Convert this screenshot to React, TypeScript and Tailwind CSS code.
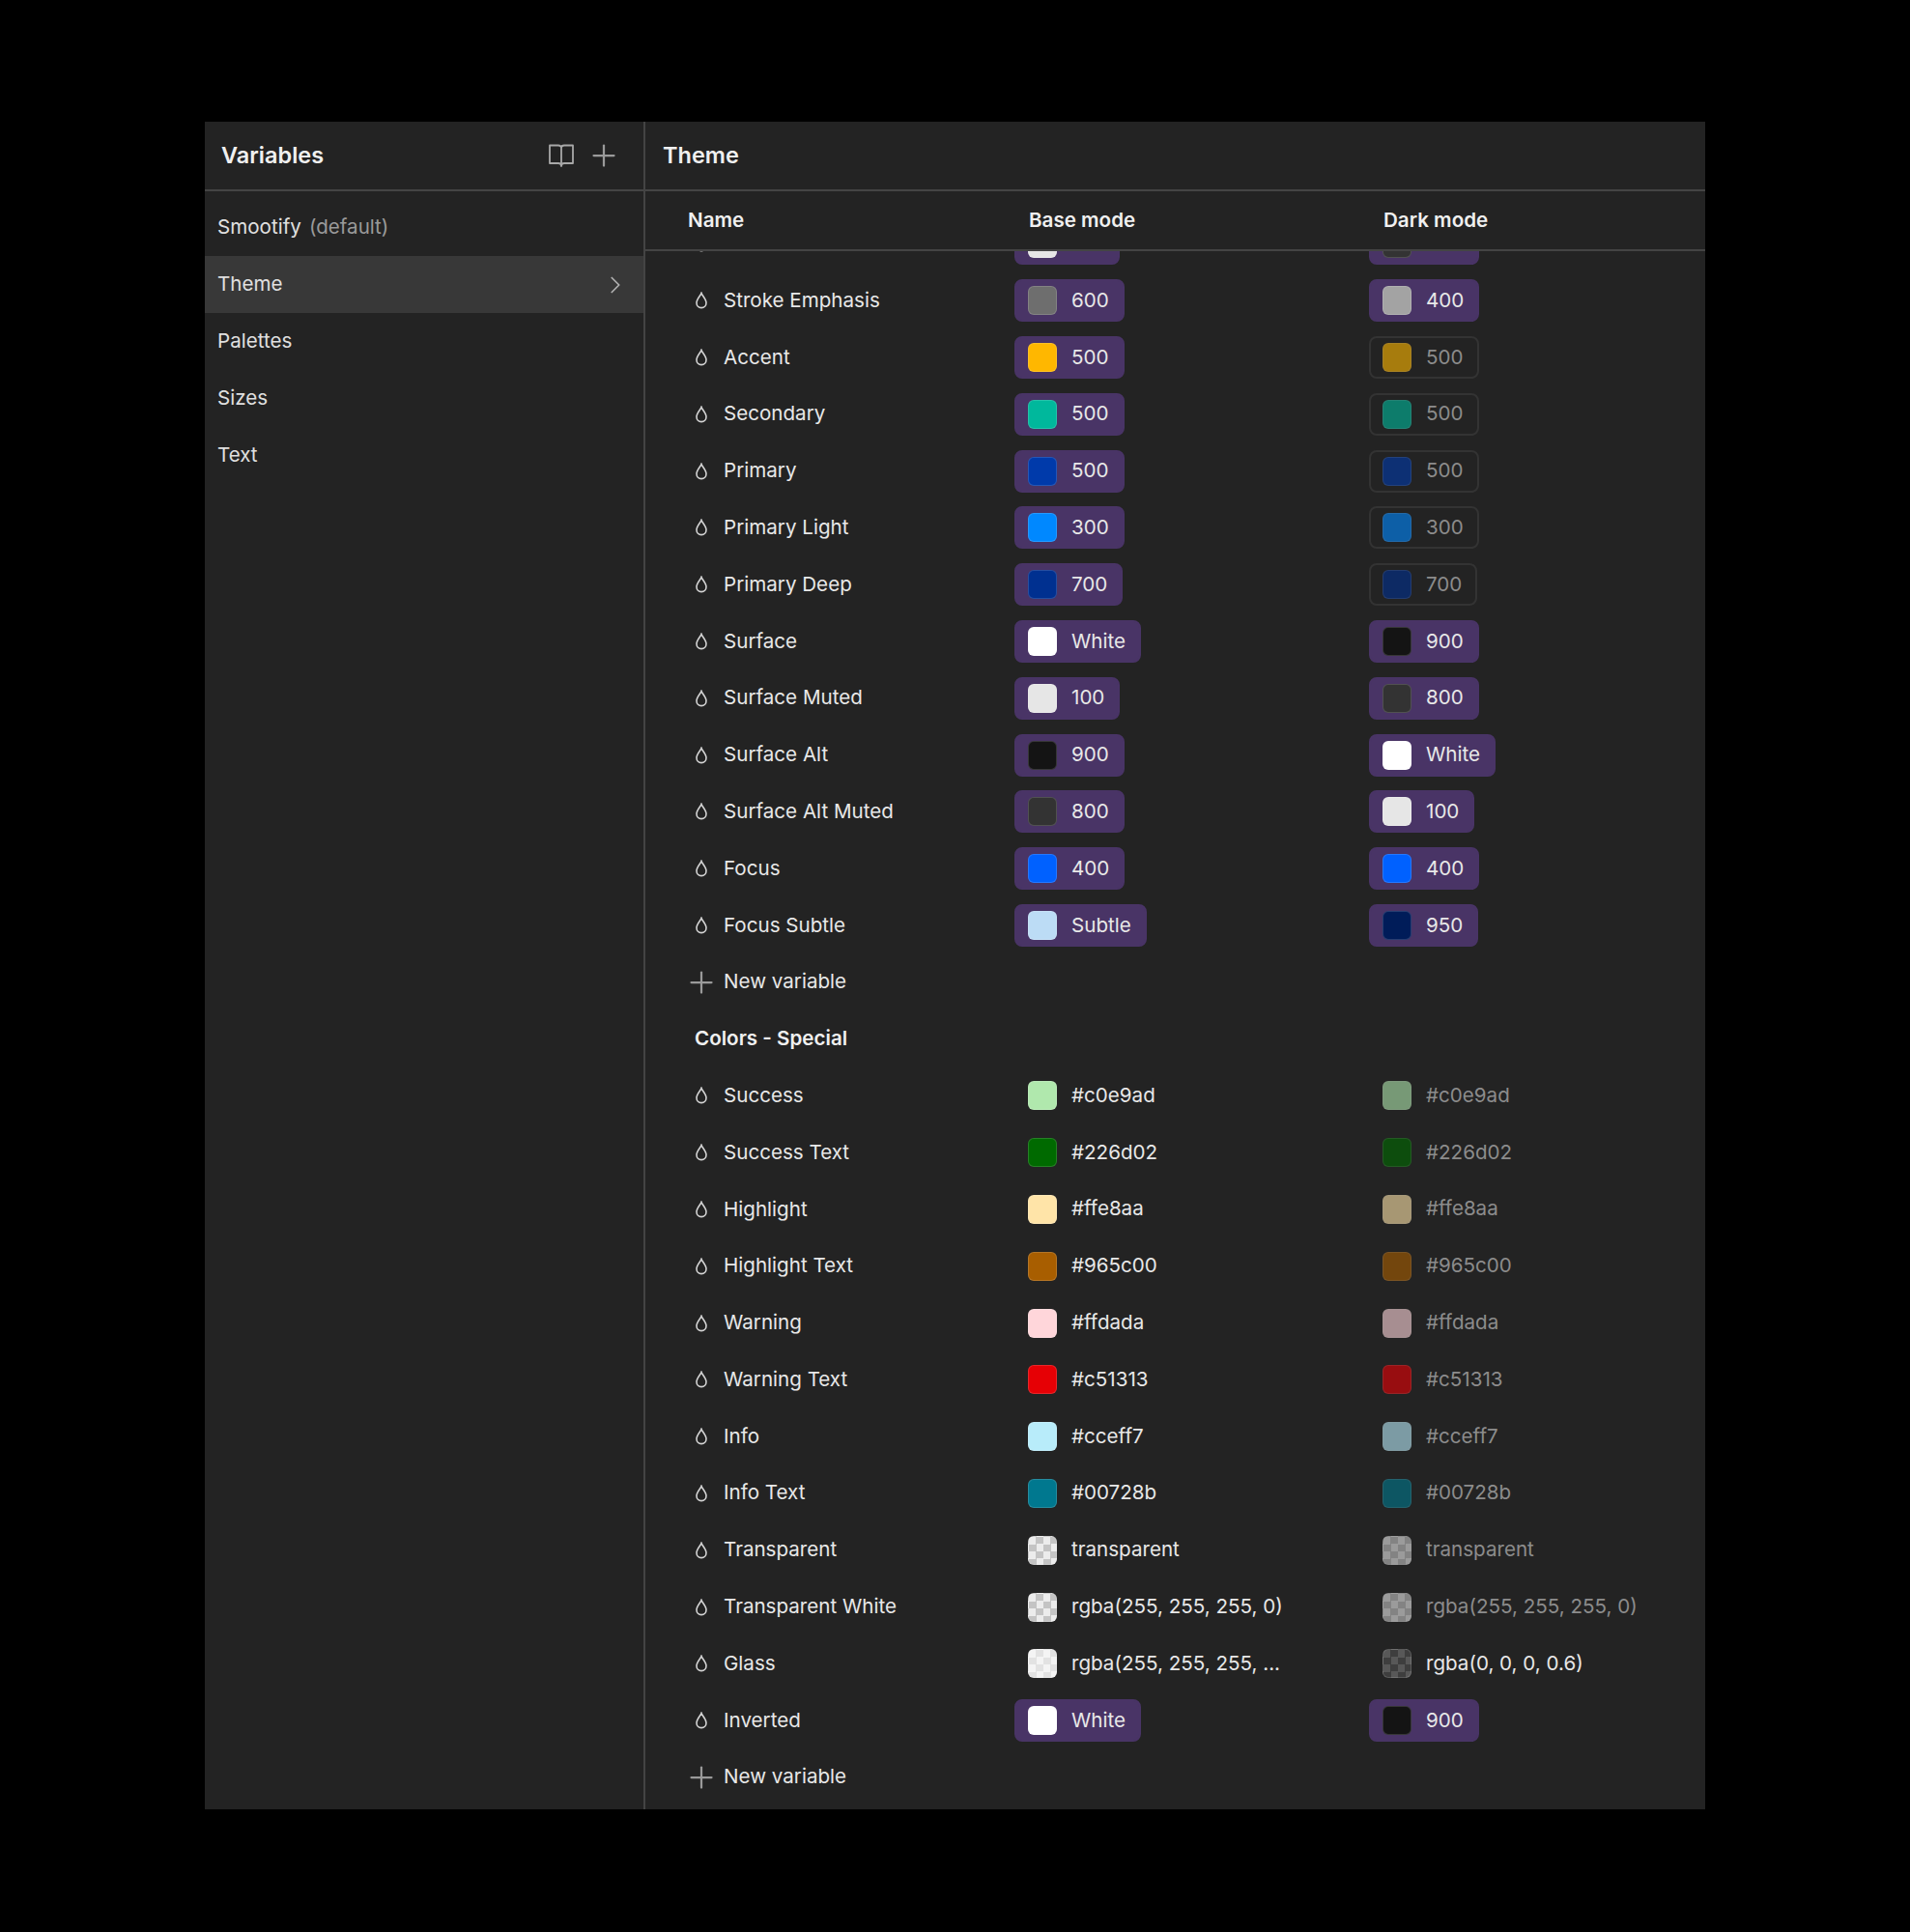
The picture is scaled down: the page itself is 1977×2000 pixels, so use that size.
import { FC } from "react";
import { ChevronRight, Plus } from "lucide-react";

interface Value {
  label: string;
  swatch: string;
  alias?: boolean;
  dim?: boolean;
}

interface Variable {
  name: string;
  base: Value;
  dark: Value;
}

const a = (label: string, swatch: string, dim = false): Value => ({ label, swatch, alias: true, dim });
const v = (label: string, swatch: string, dim = false): Value => ({ label, swatch, dim });

const CHECKER =
  "bg-[repeating-conic-gradient(#c4c4c4_0_25%,#ececec_0_50%)] bg-[length:15px_15px]";
const GLASS =
  "bg-[repeating-conic-gradient(#e2e2e2_0_25%,#f4f4f4_0_50%)] bg-[length:15px_15px]";
const GLASS_DARK =
  "bg-[repeating-conic-gradient(#3e3e3e_0_25%,#585858_0_50%)] bg-[length:15px_15px]";

const themeColors: Variable[] = [
  { name: "Stroke Emphasis", base: a("600", "bg-[#6e6e6e]"), dark: a("400", "bg-[#a3a3a3]") },
  { name: "Accent", base: a("500", "bg-[#ffb700]"), dark: a("500", "bg-[#ffb700]", true) },
  { name: "Secondary", base: a("500", "bg-[#00b89c]"), dark: a("500", "bg-[#00b89c]", true) },
  { name: "Primary", base: a("500", "bg-[#003aaa]"), dark: a("500", "bg-[#003aaa]", true) },
  { name: "Primary Light", base: a("300", "bg-[#0088ff]"), dark: a("300", "bg-[#0088ff]", true) },
  { name: "Primary Deep", base: a("700", "bg-[#003090]"), dark: a("700", "bg-[#003090]", true) },
  { name: "Surface", base: a("White", "bg-white"), dark: a("900", "bg-[#141414]") },
  { name: "Surface Muted", base: a("100", "bg-[#e6e6e6]"), dark: a("800", "bg-[#333333]") },
  { name: "Surface Alt", base: a("900", "bg-[#141414]"), dark: a("White", "bg-white") },
  { name: "Surface Alt Muted", base: a("800", "bg-[#333333]"), dark: a("100", "bg-[#e6e6e6]") },
  { name: "Focus", base: a("400", "bg-[#0061ff]"), dark: a("400", "bg-[#0061ff]") },
  { name: "Focus Subtle", base: a("Subtle", "bg-[#bcdcf5]"), dark: a("950", "bg-[#001c59]") },
];

const specialColors: Variable[] = [
  { name: "Success", base: v("#c0e9ad", "bg-[#b0e8ad]"), dark: v("#c0e9ad", "bg-[#b0e8ad]", true) },
  { name: "Success Text", base: v("#226d02", "bg-[#006a00]"), dark: v("#226d02", "bg-[#006a00]", true) },
  { name: "Highlight", base: v("#ffe8aa", "bg-[#ffe4a8]"), dark: v("#ffe8aa", "bg-[#ffe4a8]", true) },
  { name: "Highlight Text", base: v("#965c00", "bg-[#a85e00]"), dark: v("#965c00", "bg-[#a85e00]", true) },
  { name: "Warning", base: v("#ffdada", "bg-[#ffd6da]"), dark: v("#ffdada", "bg-[#ffd6da]", true) },
  { name: "Warning Text", base: v("#c51313", "bg-[#e60005]"), dark: v("#c51313", "bg-[#e60005]", true) },
  { name: "Info", base: v("#cceff7", "bg-[#b8ecfa]"), dark: v("#cceff7", "bg-[#b8ecfa]", true) },
  { name: "Info Text", base: v("#00728b", "bg-[#00788f]"), dark: v("#00728b", "bg-[#00788f]", true) },
  { name: "Transparent", base: v("transparent", CHECKER), dark: v("transparent", CHECKER, true) },
  { name: "Transparent White", base: v("rgba(255, 255, 255, 0)", CHECKER), dark: v("rgba(255, 255, 255, 0)", CHECKER, true) },
  { name: "Glass", base: v("rgba(255, 255, 255, ...", GLASS), dark: v("rgba(0, 0, 0, 0.6)", GLASS_DARK) },
  { name: "Inverted", base: a("White", "bg-white"), dark: a("900", "bg-[#141414]") },
];

const collections = ["Smootify", "Theme", "Palettes", "Sizes", "Text"];

const DropIcon: FC = () => (
  <svg width="14" height="18" viewBox="0 0 14 18" fill="none" className="text-[#d4d4d4]">
    <path
      d="M7 1.5 C7.6 3.6 12 7.6 12 11.4 C12 14.5 9.8 16.6 7 16.6 C4.2 16.6 2 14.5 2 11.4 C2 7.6 6.4 3.6 7 1.5 Z"
      stroke="currentColor"
      strokeWidth="1.6"
    />
  </svg>
);

const BookIcon: FC = () => (
  <svg width="28" height="26" viewBox="0 0 28 26" fill="none" className="text-[#a8a8a8]">
    <path
      d="M14 5 C14 3 12.5 2.5 11 2.5 H2 V21 H11 C12.5 21 14 22 14 24 C14 22 15.5 21 17 21 H26 V2.5 H17 C15.5 2.5 14 3 14 5 Z M14 5 V24"
      stroke="currentColor"
      strokeWidth="1.8"
      strokeLinejoin="round"
    />
  </svg>
);

const ValueCell: FC<{ value: Value }> = ({ value }) => {
  const chrome = value.alias
    ? value.dim
      ? "border-[#333333]"
      : "border-[#493466] bg-[#493466]"
    : "border-transparent";
  return (
    <div className={`flex h-[44px] w-fit items-center gap-[15px] rounded-[8px] border-2 pl-[12px] pr-[14px] ${chrome}`}>
      <span
        className={`h-[30px] w-[30px] shrink-0 rounded-[6px] border border-white/15 ${value.swatch} ${value.dim ? "opacity-60" : ""}`}
      />
      <span className={value.dim ? "text-[#8c8c8c]" : "text-[#e8e8e8]"}>{value.label}</span>
    </div>
  );
};

const Row: FC<{ item: Variable }> = ({ item }) => (
  <div className="grid h-[58.8px] grid-cols-[382px_367px_1fr] items-center">
    <div className="flex items-center gap-[16px] pl-[51px] text-[#e8e8e8]">
      <DropIcon />
      <span>{item.name}</span>
    </div>
    <ValueCell value={item.base} />
    <ValueCell value={item.dark} />
  </div>
);

const NewVariable: FC = () => (
  <div className="flex h-[58.8px] items-center gap-[5px] pl-[40px] text-[#e8e8e8]">
    <Plus size={36} strokeWidth={1.5} className="text-[#9a9a9a]" />
    <span>New variable</span>
  </div>
);

export default function App() {
  return (
    <div className="flex min-h-[2000px] w-full bg-black py-[126px] pl-[212px] pr-[212px] font-['Inter',sans-serif] text-[20.6px]">
      <div className="flex h-[1747px] w-full overflow-hidden bg-[#232323]">
        {/* Sidebar */}
        <aside className="w-[456px] shrink-0 border-r-2 border-[#444444]">
          <div className="flex h-[72px] items-center justify-between border-b-2 border-[#444444] pl-[17px] pr-[23px]">
            <h1 className="text-[23.5px] font-semibold text-[#f0f0f0]">Variables</h1>
            <div className="flex items-center gap-[12px]">
              <BookIcon />
              <Plus size={36} strokeWidth={1.5} className="text-[#9a9a9a]" />
            </div>
          </div>
          <nav className="pt-[8.5px]">
            {collections.map((name) => (
              <div
                key={name}
                className={`flex h-[58.8px] items-center justify-between pl-[13px] pr-[14px] text-[#e0e0e0] ${name === "Theme" ? "bg-[#383838]" : ""}`}
              >
                <span>
                  {name}
                  {name === "Smootify" && <span className="ml-[8px] text-[#9a9a9a]">(default)</span>}
                </span>
                {name === "Theme" && <ChevronRight size={30} strokeWidth={1.4} className="text-[#b0b0b0]" />}
              </div>
            ))}
          </nav>
        </aside>

        {/* Main table */}
        <main className="flex min-w-0 flex-1 flex-col">
          <div className="flex h-[72px] shrink-0 items-center border-b-2 border-[#444444] pl-[18px]">
            <h2 className="text-[23.5px] font-semibold text-[#f0f0f0]">Theme</h2>
          </div>
          <div className="grid h-[62px] shrink-0 grid-cols-[353px_367px_1fr] items-center border-b-2 border-[#444444] pl-[44px] font-semibold text-[#f0f0f0]">
            <span>Name</span>
            <span>Base mode</span>
            <span>Dark mode</span>
          </div>
          <div className="min-h-0 flex-1 overflow-hidden">
            <div className="-mt-[37px]">
              <Row item={{ name: "Stroke Muted", base: a("100", "bg-[#e6e6e6]"), dark: a("800", "bg-[#333333]") }} />
              {themeColors.map((item) => (
                <Row key={item.name} item={item} />
              ))}
              <NewVariable />
              <div className="flex h-[58.8px] items-center pl-[51px] font-semibold text-[#f0f0f0]">Colors - Special</div>
              {specialColors.map((item) => (
                <Row key={item.name} item={item} />
              ))}
              <NewVariable />
            </div>
          </div>
        </main>
      </div>
    </div>
  );
}
